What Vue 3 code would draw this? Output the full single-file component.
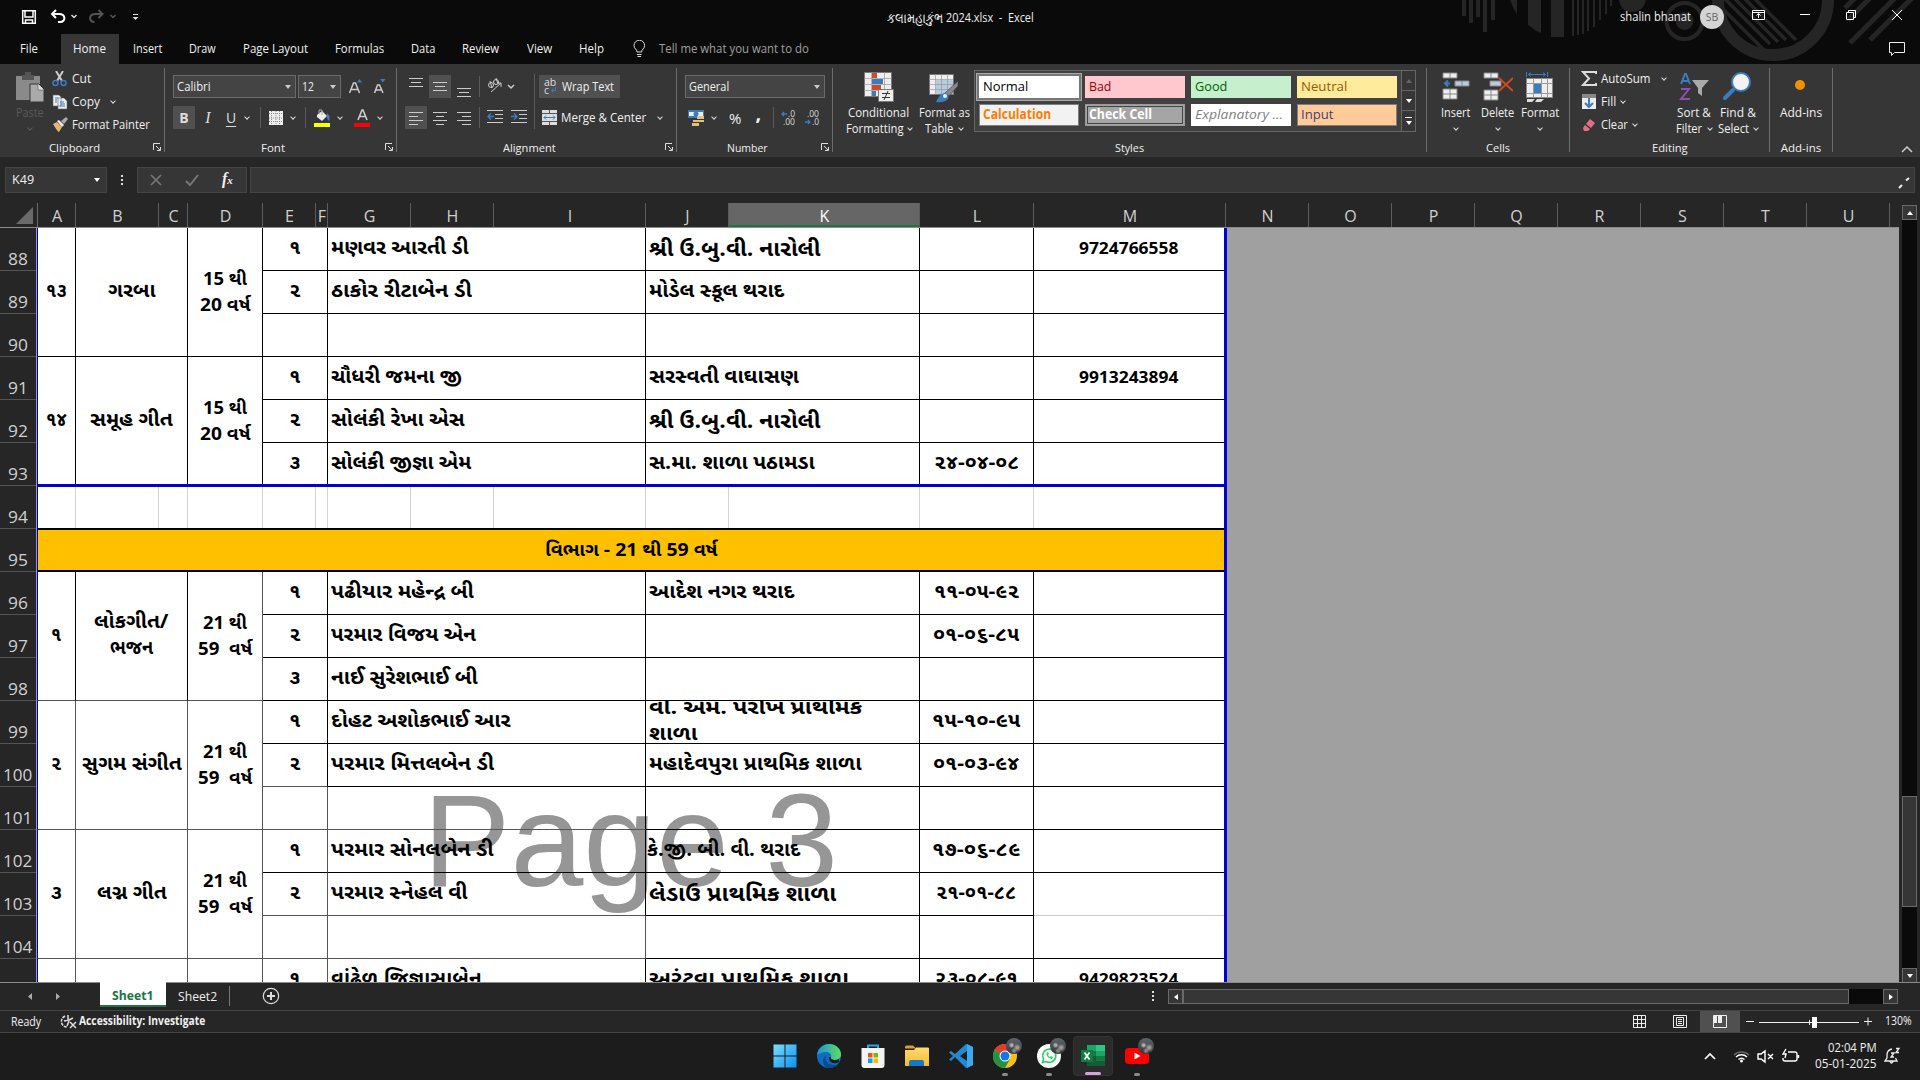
<script setup>
// Scales a text run horizontally so that it takes up the given width.
const fit = (el, { value }) => {
  if (!value) return
  el.style.transform = ''
  el.style.marginRight = ''
  const w = el.offsetWidth
  if (!w) return
  el.style.transform = `scaleX(${value / w})`
  el.style.marginRight = `${value - w}px`
}
const vFit = { mounted: fit, updated: fit }

const tabs = [
  ['File', 18], ['Home', 33], ['Insert', 29], ['Draw', 27], ['Page Layout', 65], ['Formulas', 49],
  ['Data', 24], ['Review', 37], ['View', 25], ['Help', 25],
]

const styles = [
  ['Normal', 'normal', 45], ['Bad', 'bad', 22], ['Good', 'good', 32], ['Neutral', 'neutral', 46],
  ['Calculation', 'calc', 68], ['Check Cell', 'check', 63], ['Explanatory ...', 'expl', 88], ['Input', 'input', 32],
]

const columns = [
  ['A', 38], ['B', 83], ['C', 29], ['D', 75], ['E', 53], ['F', 12], ['G', 83], ['H', 83], ['I', 152],
  ['J', 83], ['K', 191], ['L', 114], ['M', 192], ['N', 83], ['O', 83], ['P', 83], ['Q', 83], ['R', 83],
  ['S', 83], ['T', 83], ['U', 83],
]
const rowNumbers = Array.from({ length: 18 }, (_, i) => (i < 17 ? 88 + i : ''))

// Grid lines: 1 A, 2 B:C, 3 D, 4 E:F, 5 G:I, 6 J:K, 7 L, 8 M
const cells = []
const put = (col, row, span, lines, cls = '') => cells.push({ col, row, span, lines, cls })

const groups = [
  [1, '૧૩', 21, [['ગરબા', 48]], '15 થી', '20 વર્ષ', 50],
  [4, '૧૪', 21, [['સમૂહ ગીત', 83]], '15 થી', '20 વર્ષ', 50],
  [9, '૧', 10, [['લોકગીત/', 74], ['ભજન', 43]], '21 થી', '59  વર્ષ', 54],
  [12, '૨', 10, [['સુગમ સંગીત', 100]], '21 થી', '59  વર્ષ', 54],
  [15, '૩', 11, [['લગ્ન ગીત', 70]], '21 થી', '59  વર્ષ', 54],
]
for (const [row, n, nw, name, a, b, bw] of groups) {
  const soft = row > 9 ? 'soft-r soft-b' : row === 9 ? 'soft-b' : ''
  const end = row === 4 ? ' no-b' : ''
  put(1, row, 3, [[n, nw]], soft + end)
  put(2, row, 3, name, soft + end)
  put(3, row, 3, [[a, 44], [b, bw]], 'age ' + (row >= 9 ? 'soft-r soft-b' : '') + end)
}
const entries = [
  [1, '૧', 'મણવર આરતી ડી', 138, 'શ્રી ઉ.બુ.વી. નારોલી', 171, '', 0, '9724766558'],
  [2, '૨', 'ઠાકોર રીટાબેન ડી', 141, 'મોડેલ સ્કૂલ થરાદ', 135],
  [3],
  [4, '૧', 'ચૌધરી જમના જી', 131, 'સરસ્વતી વાઘાસણ', 150, '', 0, '9913243894'],
  [5, '૨', 'સોલંકી રેખા એસ', 134, 'શ્રી ઉ.બુ.વી. નારોલી', 171],
  [6, '૩', 'સોલંકી જીજ્ઞા એમ', 140, 'સ.મા. શાળા પઠામડા', 166, '૨૪-૦૪-૦૮', 85],
  [9, '૧', 'પઢીયાર મહેન્દ્ર બી', 143, 'આદેશ નગર થરાદ', 145, '૧૧-૦૫-૯૨', 85],
  [10, '૨', 'પરમાર વિજય એન', 145, '', 0, '૦૧-૦૬-૮૫', 86],
  [11, '૩', 'નાઈ સુરેશભાઈ બી', 147],
  [12, '૧', 'દોહટ અશોકભાઈ આર', 179, ['વી. એમ. પરીખ પ્રાથમિક', 'શાળા'], [213, 49], '૧૫-૧૦-૯૫', 88],
  [13, '૨', 'પરમાર મિત્તલબેન ડી', 163, 'મહાદેવપુરા પ્રાથમિક શાળા', 213, '૦૧-૦૩-૯૪', 86],
  [14],
  [15, '૧', 'પરમાર સોનલબેન ડી', 163, 'કે.જી. બી. વી. થરાદ', 153, '૧૭-૦૬-૮૯', 88],
  [16, '૨', 'પરમાર સ્નેહલ વી', 137, 'લેડાઉ પ્રાથમિક શાળા', 187, '૨૧-૦૧-૮૮', 80],
  [17],
  [18, '૧', 'વાંઢેળ જિજ્ઞાસાબેન', 151, 'અરંટવા પ્રાથમિક શાળા', 200, '૨૩-૦૮-૯૧', 83, '9429823524'],
]
const lines = (t, w) => (Array.isArray(t) ? t.map((s, i) => [s, w[i]]) : t ? [[t, w]] : [])
for (const [r, n, name, nw, school, sw, date, dw, phone] of entries) {
  const last = r === 6 ? ' no-b' : ''
  put(4, r, 1, lines(n, 11), (r >= 14 ? 'soft-r' : '') + ([13, 14, 16, 17].includes(r) ? ' soft-b' : '') + last)
  put(5, r, 1, lines(name, nw), 'left' + ([14, 16, 17].includes(r) ? ' soft-b' : '') + (r === 17 ? ' soft-r' : '') + last)
  put(6, r, 1, lines(school, sw), 'left' + ([1, 5, 16].includes(r) ? ' big' : '') + (r === 15 ? ' pull' : '') + last)
  put(7, r, 1, lines(date, dw), last)
  put(8, r, 1, lines(phone, 99), 'phone' + (r === 16 ? ' pale-b' : '') + last)
}
for (let c = 1; c < 4; c++) put(c, 18, 1, [], 'soft-r')
const spacerCols = [38, 83, 29, 75, 53, 12, 83, 83, 152, 83, 191, 114]

const taskIcons = ['start', 'edge', 'store', 'folder', 'code', 'chrome', 'whatsapp', 'excel', 'youtube']
const hasBadge = (n) => ['chrome', 'whatsapp', 'youtube'].includes(n)
</script>

<template>
  <div class="app">
    <header class="top">
      <svg class="decor" width="500" height="64" viewBox="0 0 500 64">
        <g fill="none" stroke="#252525" stroke-width="4">
          <path d="M44 0v16M51 0v23M58 0v17M65 0v32M73 0v20" />
          <path d="M153 0v36M158 0v35M163 0v34M168 0v31M174 0v27M180 0v20M186 0v14M191 0v6" stroke-width="2" />
          <path d="M298-8l52 52M308-8l50 50M318-8l48 48M328-8l48 48M290-4l54 54" stroke-width="3.500" />
          <path d="M425 8L436-3M428 20l24-24M430 43L477-4M450 40L494-4" stroke-width="5" />
          <circle cx="264.500" cy="21" r="18" /><circle cx="264.500" cy="21" r="7" fill="#252525" />
          <circle cx="353" cy="0" r="55" stroke-width="12" />
        </g>
        <path d="M90 0h7v14q-4-6-7-14zM108 0h13v33q-7-3-13-8zM131 0h13v37h-13zM199 0h27q-3 12-14 12T199 0z" fill="#252525" />
      </svg>
      <div class="title">
        <svg class="quick" width="145" height="34" viewBox="0 0 145 34" fill="none">
          <path d="M22.700 10.700h12.600v12.600H22.700zM25 11v6h8v-6M25.500 23v-3h7v3" stroke="#fff" stroke-width="1.500" />
          <path d="M56 10l-4 4 4 4M52.500 14H59c7 0 7 8 1 8h-2" stroke="#fff" stroke-width="2" />
          <path d="M71.500 15l2.500 2.500 2.500-2.500" stroke="#ddd" stroke-width="1.500" />
          <path d="M82 10l4 4-4 4M85.500 14H79c-7 0-7 8-1 8" stroke="#555" stroke-width="2" transform="translate(16.500 0)" />
          <path d="M110.500 15l2.500 2.500 2.500-2.500" stroke="#555" stroke-width="1.500" />
          <path d="M108.500 14.500h5" stroke="#ddd" transform="translate(24.500 0)" /><path d="M132.500 17h6l-3 3z" fill="#ddd" />
        </svg>
        <div class="doc"><span v-fit="56" class="guj">કલામહાકુંભ</span><span v-fit="88" class="rest">2024.xlsx&nbsp; -&nbsp; Excel</span></div>
        <div class="user"><span v-fit="71">shalin bhanat</span></div>
        <div class="avatar">SB</div>
        <svg class="winbtns" width="190" height="34" viewBox="0 0 190 34" fill="none" stroke="#fff" stroke-width="1">
          <path d="M22.500 10.500h12v9h-12zM22.500 12.500h12M28.500 18v-4M26.500 15.500l2-2 2 2" />
          <path d="M70 14.500h10M116.500 12.500h7v7h-7zM118.500 12v-1.500h7v7H124M162 10l10 10M172 10l-10 10" />
        </svg>
      </div>
      <nav class="tabs">
        <div v-for="[t, w] in tabs" :key="t" class="tab" :class="{ on: t === 'Home', file: t === 'File' }"><span v-fit="w">{{ t }}</span></div>
        <svg class="bulb" width="13" height="18" viewBox="0 0 13 18" fill="none" stroke="#ddd"><path d="M4 12c0-3-3-3-3-6.500a5.300 5.300 0 0 1 10.600 0C11.600 9 8.600 9 8.600 12zM4 14.500h4.600M4.500 16.500h3.600" /></svg>
        <span v-fit="150" class="tell">Tell me what you want to do</span>
        <svg class="comment" width="18" height="17" viewBox="0 0 18 17" fill="none" stroke="#eee"><path d="M1.500 1.500h15v10h-10l-3 3v-3h-2z" /></svg>
      </nav>
    </header>

    <section class="ribbon">
      <div class="group g-clip">
        <div class="body">
          <div class="tile paste">
            <svg width="30" height="31" viewBox="0 0 30 31"><path d="M1 4h24v24H1z" fill="#8a8a8a" /><path d="M7 3h3V0h6v3h3v5H7z" fill="#555" /><path d="M15 12h9l5 5v13H15z" fill="#aaa" stroke="#363636" /><path d="M23 12v6h6" fill="#ddd" stroke="#555" stroke-width=".6" /></svg>
            <span v-fit="28">Paste</span><i class="chev"></i>
          </div>
          <div class="stack">
            <div class="line"><svg width="16" height="16" viewBox="0 0 16 16" fill="none"><path d="M4 0l6 10M11 0L5 10" stroke="#ccc" stroke-width="2" /><circle cx="3.500" cy="12" r="2.500" stroke="#3a7cc0" stroke-width="1.500" /><circle cx="11.500" cy="12" r="2.500" stroke="#3a7cc0" stroke-width="1.500" /></svg><span v-fit="19">Cut</span></div>
            <div class="line"><svg width="16" height="16" viewBox="0 0 16 16"><path d="M1 1h6l2 2v9H1zM6 4h6l3 3v8H6z" fill="#eee" stroke="#666" stroke-width=".6" /><path d="M3 4h3M3 6h2M3 8h2M8 8h4M8 10h5M8 12h5" stroke="#3a7cc0" /></svg><span v-fit="28">Copy</span><i class="chev"></i></div>
            <div class="line"><svg width="16" height="16" viewBox="0 0 16 16"><path d="M1 7l4-2 5 5-3 5q-2-1-6-8z" fill="#e5b871" /><path d="M5 4l2-1 5 5-2 2z" fill="#eee" /><path d="M9 4l5-4 2 2-4 5z" fill="#aaa" /></svg><span v-fit="78">Format Painter</span></div>
          </div>
        </div>
        <div class="label has"><span v-fit="51">Clipboard</span><svg class="launch" width="9" height="9" viewBox="0 0 9 9" fill="none" stroke="#ddd"><path d="M.5 7V.5H7M3 3l4 4M7.500 4v3.500H4" /></svg></div>
      </div>

      <div class="group g-font">
        <div class="body col">
          <div class="tools">
            <div class="combo w123"><span v-fit="34">Calibri</span><b></b></div>
            <div class="combo w43"><span v-fit="12">12</span><b></b></div>
            <svg class="ml6" width="40" height="23" viewBox="0 0 40 23"><path d="M.5 18L4.500 8h2l4 10M2 14.500h7M25.500 18l3-8h2l3.500 8M27 15h6" fill="none" stroke="#ccc" stroke-width="1.500" /><path d="M8 7.500l2.500-3.500L13 7.500zM31 4h5.500l-2.700 3.500z" fill="#3a7cc0" /></svg>
          </div>
          <div class="tools">
            <div class="btn on bold">B</div><div class="btn ital">I</div><div class="btn und">U</div><i class="chev"></i><u class="sep m1"></u>
            <svg class="ml8" width="14" height="14" viewBox="0 0 14 14"><path d="M0 0h14v14H0z" fill="#eee" /><path d="M0 2.500h14M0 7h14M0 10.500h14M2.500 0v14M7 0v14M10.500 0v14" stroke="#777" stroke-width=".8" stroke-dasharray="1 1" /></svg>
            <i class="chev ml8"></i><u class="sep m2"></u>
            <svg class="ml8" width="17" height="18" viewBox="0 0 17 18"><path d="M3 6l5-4 5 5-5 5-5-4z" fill="#eee" /><path d="M5 5V1h3v5" fill="none" stroke="#aaa" /><path d="M13 4q4 3 2 8-3-2-2-8" fill="#3a7cc0" /><path d="M0 14h16v4H0z" fill="#ff0" /></svg>
            <i class="chev ml5"></i>
            <svg class="ml10" width="17" height="18" viewBox="0 0 17 18"><path d="M4 11l4-10h1l4 10M5.500 7.500h6" fill="none" stroke="#ccc" stroke-width="1.600" /><path d="M0 14h16v4H0z" fill="red" /></svg>
            <i class="chev ml5"></i>
          </div>
        </div>
        <div class="label has"><span v-fit="24">Font</span><svg class="launch" width="9" height="9" viewBox="0 0 9 9" fill="none" stroke="#ddd"><path d="M.5 7V.5H7M3 3l4 4M7.500 4v3.500H4" /></svg></div>
      </div>

      <div class="group g-align">
        <div class="body">
          <svg class="alicons" width="138" height="56" viewBox="0 0 138 56" fill="none" stroke="#ccc">
            <path d="M32 1h22v23H32zM8 32h22v23H8z" fill="#505050" stroke="none" />
            <path d="M12 4.500h14M14 8.500h10M12 12.500h14M36 8.500h14M38 12.500h10M36 16.500h14M60 14.500h14M62 18.500h10M60 22.500h14" />
            <path d="M12 38.500h14M12 42.500h9M12 46.500h14M12 50.500h9M36 38.500h14M39 42.500h8M36 46.500h14M39 50.500h8M60 38.500h14M65 42.500h9M60 46.500h14M65 50.500h9" />
            <path d="M82.500 2v21M82.500 33v21M137.500 0v55" stroke="#5a5a5a" />
            <path d="M94 18l10-9M104 13V9h-4" /><circle cx="94" cy="11" r="2.500" /><circle cx="99" cy="8" r="2.500" /><path d="M95 14l-2-7M101 10l-2-6" />
            <path d="M111 11l3 3 3-3" stroke-width="1.500" />
            <path d="M90 36.500h16M98 40.500h8M98 44.500h8M90 48.500h16M114 36.500h16M122 40.500h8M122 44.500h8M114 48.500h16" />
            <path d="M97 42.500h-6m3-3l-3 3 3 3M114 42.500h6m-3-3l3 3-3 3" stroke="#3a7cc0" stroke-width="1.500" />
          </svg>
          <div class="col wrapcol">
            <div class="wrapbtn"><svg width="14" height="17" viewBox="0 0 14 17"><text x="0" y="8" font-size="10.500" fill="#ddd" font-family="Open Sans, sans-serif">ab</text><text x="0" y="16" font-size="10.500" fill="#ddd" font-family="Open Sans, sans-serif">c</text><path d="M11.500 9v3.500H7.500m2-2l-2 2 2 2" fill="none" stroke="#3a7cc0" /></svg><span v-fit="52">Wrap Text</span></div>
            <div class="wrapbtn plain"><svg width="15" height="15" viewBox="0 0 15 15"><path d="M0 0h15v15H0z" fill="#ddd" /><path d="M0 3.500h15M0 11.500h15M7.500 0v3M7.500 12v3" stroke="#555" /><path d="M2 7.500h11M4 5.500l-2 2 2 2M11 5.500l2 2-2 2" fill="none" stroke="#3a7cc0" /></svg><span v-fit="85">Merge &amp; Center</span><i class="chev"></i></div>
          </div>
        </div>
        <div class="label has"><span v-fit="53">Alignment</span><svg class="launch" width="9" height="9" viewBox="0 0 9 9" fill="none" stroke="#ddd"><path d="M.5 7V.5H7M3 3l4 4M7.500 4v3.500H4" /></svg></div>
      </div>

      <div class="group g-num">
        <div class="body col">
          <div class="tools"><div class="combo w140"><span v-fit="40">General</span><b></b></div></div>
          <div class="tools numrow">
            <svg width="17" height="17" viewBox="0 0 17 17"><path d="M0 1h16v8H0z" fill="#3a7cc0" /><path d="M1 3h14v4H1z" fill="#eee" /><circle cx="8" cy="5" r="2.500" fill="#3a7cc0" /><path d="M9 7h7v3H9zM5 11h7v2H5zM9 11h7v2H9zM4 14h7v3H4z" fill="#e5c07a" /></svg>
            <i class="chev ml5"></i><span class="pct">%</span><span class="comma">,</span><u class="sep"></u>
            <svg width="40" height="17" viewBox="0 0 40 17" font-family="Open Sans, sans-serif" font-size="8.500" fill="#ddd"><text x="7" y="8">.0</text><text x="2" y="16">.00</text><text x="26" y="8">.00</text><text x="31" y="16">.0</text><path d="M6 5H1m2-2L1 5l2 2M24 13h5m-2-2l2 2-2 2" fill="none" stroke="#3a7cc0" stroke-width="1.300" /></svg>
          </div>
        </div>
        <div class="label has"><span v-fit="41">Number</span><svg class="launch" width="9" height="9" viewBox="0 0 9 9" fill="none" stroke="#ddd"><path d="M.5 7V.5H7M3 3l4 4M7.500 4v3.500H4" /></svg></div>
      </div>

      <div class="group g-styles">
        <div class="body">
          <div class="tile w70">
            <svg width="30" height="31" viewBox="0 0 30 31"><path d="M.5.5h27v24H.5z" fill="#eee" stroke="#777" /><path d="M8 1h5v5H8zM8 13h9v5H8z" fill="#d24726" /><path d="M8 7h11v5H8zM8 19h4v5H8z" fill="#3a7cc0" /><path d="M0 6.500h28M0 12.500h28M0 18.500h28M7.500 0v24M20.500 0v24" stroke="#999" stroke-width=".7" /><path d="M14.500 17.500h15v12h-15z" fill="#eee" stroke="#777" /><path d="M18 21.500h8M18 25.500h8M24 19l-4 9" stroke="#333" /></svg>
            <span v-fit="61">Conditional</span><div class="two"><span v-fit="58">Formatting</span><i class="chev"></i></div>
          </div>
          <div class="tile w62">
            <svg width="30" height="31" viewBox="0 0 30 31"><path d="M.5 2.500h24v20H.5z" fill="#eee" stroke="#777" /><path d="M7 8h17v14H7z" fill="#b5cbe0" /><path d="M0 7.500h24M0 12.500h24M0 17.500h24M6.500 2v20M12.500 2v20M18.500 2v20" stroke="#999" stroke-width=".7" /><path d="M29 9v5l-9 10-4-3z" fill="#888" stroke="#363636" stroke-width=".6" /><path d="M7 30q4-9 9-9 5 2 3 6-4 4-12 3z" fill="#3a7cc0" /><circle cx="16" cy="24" r="2" fill="#eee" /></svg>
            <span v-fit="51">Format as</span><div class="two"><span v-fit="28">Table</span><i class="chev"></i></div>
          </div>
          <div class="gallery">
            <div class="swatches"><div v-for="[t, c, w] in styles" :key="t" class="sw" :class="c"><span v-fit="w">{{ t }}</span></div></div>
            <div class="gscroll"><div><i class="up dim"></i></div><div><i class="dn"></i></div><div><s></s><i class="dn"></i></div></div>
          </div>
        </div>
        <div class="label"><span v-fit="29">Styles</span></div>
      </div>

      <div class="group g-cells">
        <div class="body">
          <div class="tile w42">
            <svg width="30" height="31" viewBox="0 0 30 31"><path d="M2 1h14v5H2zM2 17h14v10H2z" fill="#eee" stroke="#888" /><path d="M9 1v5M9 17v10M2 22h14" stroke="#888" /><path d="M14 9h14v5H14z" fill="#b5cbe0" stroke="#888" /><path d="M21 9v5" stroke="#888" /><path d="M9 11.500H4m3-3l-3 3 3 3" stroke="#3a7cc0" stroke-width="2" fill="none" /></svg>
            <span v-fit="29">Insert</span><i class="chev"></i>
          </div>
          <div class="tile w42">
            <svg width="30" height="31" viewBox="0 0 30 31"><path d="M1 1h14v5H1zM1 18h14v10H1z" fill="#eee" stroke="#888" /><path d="M8 1v5M8 18v10M1 23h14" stroke="#888" /><path d="M7 9h11v5H7z" fill="#b5cbe0" stroke="#888" /><path d="M16 6l14 13M30 6L16 19" stroke="#d24726" stroke-width="2" /></svg>
            <span v-fit="33">Delete</span><i class="chev"></i>
          </div>
          <div class="tile w42">
            <svg width="30" height="31" viewBox="0 0 30 31"><path d="M1.500 6.500h26v19h-26z" fill="#eee" stroke="#888" /><path d="M1 11.500h26M1 21.500h26M8.500 6v20M16.500 6v20M22.500 6v20" stroke="#999" /><path d="M9 12h7v9H9z" fill="#3a7cc0" /><path d="M1.500 0v5M22.500 0v5M3 2.500h18M6 .5l-2.500 2L6 4.500M18 .5l2.500 2-2.500 2" stroke="#3a7cc0" fill="none" /><path d="M2 27h8l-3 3H2zM12 27h7l-3 3h-6z" fill="#ddd" /></svg>
            <span v-fit="38">Format</span><i class="chev"></i>
          </div>
        </div>
        <div class="label"><span v-fit="24">Cells</span></div>
      </div>

      <div class="group g-edit">
        <div class="body">
          <div class="stack">
            <div class="line"><svg width="16" height="16" viewBox="0 0 16 16" fill="none" stroke="#ddd" stroke-width="2"><path d="M15 3V1H2l6 6.500L2 14h13v-2" /></svg><span v-fit="50">AutoSum</span><i class="chev far"></i></div>
            <div class="line"><svg width="16" height="16" viewBox="0 0 16 16"><path d="M1 0h14v15H1z" fill="#eee" /><path d="M1 0h14v4H1z" fill="#888" /><path d="M8 4v9M4 9l4 4 4-4" stroke="#3a7cc0" stroke-width="2" fill="none" /></svg><span v-fit="15">Fill</span><i class="chev"></i></div>
            <div class="line"><svg width="16" height="16" viewBox="0 0 16 16"><path d="M9 2l5 4-4 5-5-4z" fill="#e0708a" /><path d="M4 8l5 4-2 2H3l-1-3z" fill="#e0708a" /></svg><span v-fit="27">Clear</span><i class="chev"></i></div>
          </div>
          <div class="tile w44 sort">
            <svg width="30" height="31" viewBox="0 0 30 31" fill="none"><path d="M2 12L6 2h1l4 10M3.500 9h6" stroke="#3a7cc0" stroke-width="2" /><path d="M2 17h8L2 27h9" stroke="#8e4fb0" stroke-width="2" /><path d="M13 8h17l-7 8v8l-4-3v-5z" fill="#aaa" /></svg>
            <span v-fit="34">Sort &amp;</span><div class="two"><span v-fit="26">Filter</span><i class="chev"></i></div>
          </div>
          <div class="tile w44">
            <svg width="30" height="31" viewBox="0 0 30 31"><path d="M2 26l8-8" stroke="#3a7cc0" stroke-width="4" stroke-linecap="round" /><circle cx="18" cy="10" r="9" fill="#f3f3f3" stroke="#3a7cc0" stroke-width="2" /></svg>
            <span v-fit="36">Find &amp;</span><div class="two"><span v-fit="31">Select</span><i class="chev"></i></div>
          </div>
        </div>
        <div class="label"><span v-fit="36">Editing</span></div>
      </div>

      <div class="group g-add">
        <div class="body"><div class="tile w62"><svg width="30" height="31" viewBox="0 0 30 31"><circle cx="14" cy="13" r="5" fill="#f29100" /></svg><span v-fit="42">Add-ins</span></div></div>
        <div class="label"><span v-fit="40">Add-ins</span></div>
      </div>
      <div class="collapse"><svg width="12" height="7" viewBox="0 0 12 7" fill="none" stroke="#ccc" stroke-width="1.500"><path d="M1 6l5-5 5 5" /></svg></div>
    </section>

    <section class="fbar">
      <div class="namebox"><span v-fit="22">K49</span><i class="dn"></i></div>
      <div class="dots"><i></i><i></i><i></i></div>
      <div class="fbtns"><svg width="108" height="24" viewBox="0 0 108 24" fill="none"><path d="M13 7l10 10M23 7L13 17" stroke="#777" stroke-width="1.700" /><path d="M48 13l4 4 8-10" stroke="#777" stroke-width="2" /></svg><em>f<small>x</small></em></div>
      <div class="finput"><svg width="12" height="12" viewBox="0 0 12 12" stroke="#eee" stroke-width="2"><path d="M8 3.500L11 1M1 11l3-3" /></svg></div>
    </section>

    <section class="sheet">
      <div class="main">
        <div class="colhead">
          <div class="corner"></div>
          <div v-for="[c, w] in columns" :key="c" class="ch" :class="{ sel: c === 'K' }" :style="{ width: w + 'px' }">{{ c }}</div>
        </div>
        <div class="view">
          <div class="rowhead"><div v-for="(n, i) in rowNumbers" :key="i"><span v-fit="n > 99 ? 29 : 20">{{ n }}</span></div></div>
          <div class="page">
            <div class="mark">Page 3</div>
            <div class="cells">
              <div v-for="(c, i) in cells" :key="i" class="cell" :class="c.cls" :style="{ gridColumn: c.col, gridRow: `${c.row} / span ${c.span}` }">
                <div v-for="([t, w], k) in c.lines" :key="k" class="tl"><span v-fit="w">{{ t }}</span></div>
              </div>
              <div class="spacer"><i v-for="(w, i) in spacerCols" :key="i" :style="{ width: w + 'px' }"></i></div>
              <div class="banner"><span v-fit="173">વિભાગ - 21 થી 59 વર્ષ</span></div>
            </div>
          </div>
          <div class="void"></div>
        </div>
      </div>
      <div class="vscroll"><div class="sb"><i class="up"></i></div><div class="track"><div class="thumb"></div></div><div class="sb"><i class="dn"></i></div></div>
    </section>

    <section class="sheettabs">
      <svg width="100" height="28" viewBox="0 0 100 28" fill="#aaa"><path d="M32 10v7l-4-3.500zM56 10v7l4-3.500z" /></svg>
      <div class="st on"><span v-fit="41">Sheet1</span></div>
      <div class="st"><span v-fit="39">Sheet2</span></div>
      <u></u>
      <svg class="plus" width="18" height="18" viewBox="0 0 18 18" fill="none" stroke="#ddd"><circle cx="9" cy="9" r="7.700" stroke-width="1.200" /><path d="M9 5v8M5 9h8" stroke-width="2" /></svg>
      <div class="dots"><i></i><i></i><i></i></div>
      <div class="hscroll"><div class="sb"><i class="lf"></i></div><div class="hthumb"></div><div class="htrack"></div><div class="sb"><i class="rt"></i></div></div>
    </section>

    <section class="status">
      <span v-fit="30" class="ready">Ready</span>
      <svg class="acc" width="17" height="16" viewBox="0 0 17 16" fill="none" stroke="#ddd" stroke-width="1.500"><path d="M5 2Q0 5 2 10q2 3 5 3" stroke-dasharray="3 1" /><path d="M8 1v5M4 7l5-1 4-2M9 7l-2 5M10 8l6 6M16 8l-6 6" /></svg>
      <span v-fit="126" class="access">Accessibility: Investigate</span>
      <div class="views">
        <svg width="14" height="14" viewBox="0 0 14 14" fill="none" stroke="#eee"><path d="M.5.5h12v12H.5zM4.500 0v13M8.500 0v13M0 4.500h13M0 8.500h13" /></svg>
        <svg width="14" height="14" viewBox="0 0 14 14" fill="none" stroke="#eee"><path d="M.5.5h13v12H.5zM3.500 2.500h7v8h-7zM5 4.500h4M5 6.500h4M5 8.500h4" /></svg>
        <div class="von"><svg width="14" height="14" viewBox="0 0 14 14" fill="none" stroke="#eee"><path d="M.5.5h13v12H.5z" /><path d="M1 1h3v7H1zM5 1h4v7H5z" fill="#eee" stroke="none" /></svg></div>
      </div>
      <svg class="zoom" width="132" height="20" viewBox="0 0 132 20" stroke="#eee"><path d="M6 9.500h8M124 9.500h8M128 5.500v8M19 10.500h100M69.500 8v5" /><path d="M72 5h5v11h-5z" fill="#fff" stroke="none" /></svg>
      <div class="pc"><span v-fit="27">130%</span></div>
    </section>

    <footer class="taskbar">
      <div class="dock">
        <div v-for="n in taskIcons" :key="n" class="ti" :class="{ active: n === 'excel', run: hasBadge(n) }">
          <svg width="24" height="24" viewBox="0 0 24 24">
            <defs>
              <linearGradient id="w" x2="1" y2="1"><stop stop-color="#7adfff" /><stop offset="1" stop-color="#0a90f0" /></linearGradient>
              <linearGradient id="e" x1="0" x2="1"><stop stop-color="#1c8fe0" /><stop offset="1" stop-color="#5ce05a" /></linearGradient>
              <linearGradient id="f" x2="0" y2="1"><stop stop-color="#ffdc70" /><stop offset="1" stop-color="#f5b92e" /></linearGradient>
            </defs>
            <path v-if="n === 'start'" d="M.5.5h11v11H.5zM12.500.5h11v11h-11zM.5 12.500h11v11H.5zM12.500 12.500h11v11h-11z" fill="url(#w)" />
            <template v-if="n === 'edge'">
              <circle cx="12" cy="12" r="12" fill="#0f6cbf" />
              <path d="M0 11C1 4 6 0 12 0c7 0 12 5 12 10 0 4-3 6-7 6-3 0-4-1-3-3 1-3-2-5-5-5-4 0-7 2-9 3z" fill="url(#e)" />
              <path d="M9 11c-2 5 2 11 10 10l2-1q-3 4-9 4C6 24 4 15 9 11z" fill="#0b4a8f" />
              <path d="M14 13c-1 3 5 4 8 2v3c-5 3-11 0-10-5z" fill="#1c1c1c" />
            </template>
            <template v-if="n === 'store'">
              <path d="M7 6V1.500h10V6" fill="none" stroke="#2aa5ea" stroke-width="2" /><path d="M.5 4h23v17q0 3-3 3h-17q-3 0-3-3z" fill="#f4f4f4" />
              <path d="M7 9h4.500v4.500H7z" fill="#f25022" /><path d="M12.500 9H17v4.500h-4.500z" fill="#7fba00" /><path d="M7 14.500h4.500V19H7z" fill="#00a4ef" /><path d="M12.500 14.500H17V19h-4.500z" fill="#ffb900" />
            </template>
            <template v-if="n === 'folder'">
              <path d="M0 3q0-1.500 1.500-1.500H8l3 3H0z" fill="#e0a01b" /><path d="M0 6h9l2-2.500h12q1 0 1 1V22H0z" fill="url(#f)" /><path d="M4 22v-4q0-2 2-2h11q2 0 2 2v4z" fill="#1378c8" />
            </template>
            <template v-if="n === 'code'">
              <path d="M17 0l7 3v18l-7 3L6 13l-4 4-2-1.500L4 12 0 8.500 2 7l4 3zM18 7l-7 5 7 5z" fill="#2489ca" fill-rule="evenodd" /><path d="M18 0l6 3v18l-6 3z" fill="#3aa9ef" />
            </template>
            <template v-if="n === 'chrome'">
              <circle cx="12" cy="12" r="12" fill="#fbc116" /><path d="M12 12L1.600 6A12 12 0 0 1 22.400 6z" fill="#e33b2e" /><path d="M12 12L1.600 6A12 12 0 0 0 12 24l5-9z" fill="#229342" /><circle cx="12" cy="12" r="5.500" fill="#fff" /><circle cx="12" cy="12" r="4.500" fill="#1a73e8" />
            </template>
            <template v-if="n === 'whatsapp'">
              <circle cx="12" cy="12" r="12" fill="#fff" /><path d="M5.500 18.500l1-3.500a6.600 6.600 0 1 1 2.500 2.500z" fill="none" stroke="#25d366" stroke-width="1.600" /><path d="M9.500 9q0 5 5.500 6l1-2-2-1-1 1q-2-1-2-2l1-1-1-2z" fill="#25d366" />
            </template>
            <template v-if="n === 'excel'">
              <path d="M6 1h9v7H6z" fill="#21a366" /><path d="M15 1h9v7h-9z" fill="#33c481" /><path d="M6 7h9v10H6z" fill="#107c41" /><path d="M15 7h9v5h-9z" fill="#21a366" /><path d="M6 12h18v10H6z" fill="#185c37" /><path d="M15 12h9v5h-9z" fill="#107c41" />
              <path d="M0 6h12v12H0z" fill="#107c41" /><path d="M3.500 8.500l5 7M8.500 8.500l-5 7" stroke="#fff" stroke-width="1.800" />
            </template>
            <template v-if="n === 'youtube'"><rect y="4" width="24" height="16" rx="4" fill="#f00" /><path d="M9.500 8.500v7l6-3.500z" fill="#fff" /></template>
          </svg>
          <i v-if="hasBadge(n)" class="badge"></i>
        </div>
      </div>
      <div class="tray">
        <svg width="110" height="24" viewBox="0 0 110 24" fill="none" stroke="#fff" stroke-width="1.400">
          <path d="M6 15l5-5 5 5" stroke-width="1.700" />
          <path d="M35 11a11 11 0 0 1 15 0" stroke="#666" /><path d="M37 13a8 8 0 0 1 11 0M39.500 15.500a4.500 4.500 0 0 1 6 0" /><circle cx="42.500" cy="17" r="1.500" fill="#fff" stroke="none" />
          <path d="M59 10h3l4-3v11l-4-3h-3zM69 10l5 5M74 10l-5 5M89 8h7q2 0 2 2v5q0 2-2 2H86q-2 0-2-2v-1M99.500 11v3" /><path d="M87 5l-3 5h3l-1 4" />
        </svg>
        <div class="clock"><div><span v-fit="49">02:04 PM</span></div><div><span v-fit="62">05-01-2025</span></div></div>
        <svg class="bell" width="17" height="18" viewBox="0 0 17 18" fill="none" stroke="#eee" stroke-width="1.300"><path d="M8 2Q3 3 3 8v3l-2 3h12l-1.500-3M6 14.500q1.500 3 3 0M7 6h3l-3 4h3M12 1.500h3l-3 4h3" /></svg>
      </div>
    </footer>
  </div>
</template>

<style>
body { background: #1c1c1c; overflow: hidden; }
</style>

<style scoped>
.app { width: 1920px; height: 1080px; overflow: hidden; background: #262626; color: #f0f0f0; font: 12px/16px "Open Sans", "Noto Sans", sans-serif; display: flex; flex-direction: column; }
.app * { box-sizing: border-box; }
svg { display: block; flex: none; }
span { display: inline-block; white-space: pre; transform-origin: 0 50%; flex: none; }
.top { height: 64px; background: #0a0a0a; position: relative; flex: none; }
.decor { position: absolute; right: 0; top: 0; }
.title, .tabs { position: relative; display: flex; align-items: center; }
.title { height: 34px; }
.doc { margin-left: 742px; width: 733px; padding-top: 2px; display: flex; align-items: center; }
.guj { font-size: 13.500px; }
.rest { margin-left: 3px; }
.user { width: 80px; }
.avatar { width: 24px; height: 24px; border-radius: 50%; background: #d4d4d4; color: #666; font-size: 10.500px; line-height: 24px; text-align: center; }
.winbtns { margin-left: 6px; }
.tabs { height: 30px; }
.tab { height: 30px; padding: 0 13.500px; line-height: 30px; display: flex; flex: none; }
.tab.file { padding: 0 23px 0 20px; }
.tab.on { background: #363636; padding: 0 13px 0 12px; margin-right: .5px; }
.bulb { margin-left: 16px; }
.tell { margin-left: 13px; color: #a0a0a0; }
.comment { margin-left: auto; margin-right: 14px; }

.ribbon { height: 93px; background: #363636; display: flex; flex: none; }
.group { height: 84px; margin-top: 4px; border-right: 1px solid #6c6c6c; display: flex; flex-direction: column; flex: none; }
.body { height: 71px; display: flex; }
.body.col, .col { flex-direction: column; }
.label { height: 14px; line-height: 14px; font-size: 11.500px; text-align: center; position: relative; padding-top: 3px; }
.label.has { padding-right: 15px; }
.launch { position: absolute; right: 2px; top: 5px; }
.g-clip { width: 165px; } .g-font { width: 232px; } .g-align { width: 280px; } .g-num { width: 156px; }
.g-styles { width: 594px; } .g-cells { width: 143px; } .g-edit { width: 200px; } .g-add { width: 63px; }
.chev { width: 4px; height: 4px; border: solid #ddd; border-width: 0 1.500px 1.500px 0; transform: rotate(45deg); display: block; flex: none; margin-bottom: 2px; }
.tile { display: flex; flex-direction: column; align-items: center; padding-top: 4px; }
.tile > span { margin-top: 2px; line-height: 16px; }
.tile > .chev { margin-top: 5px; }
.two { display: flex; align-items: center; gap: 5px; height: 16px; }
.paste { width: 32px; margin-left: 14px; color: #5a5a5a; }
.paste .chev { border-color: #5a5a5a; }
.stack { display: flex; flex-direction: column; margin: -1px 0 0 6px; }
.line { height: 23px; display: flex; align-items: center; gap: 4px; }
.line .chev { margin-left: 7px; }
.g-edit .stack { margin-left: 11px; width: 91px; }
.g-edit .line .chev { margin-left: 1px; }
.g-edit .line .far { margin-left: 7px; }
.tools { display: flex; height: 23px; align-items: center; margin-left: 8px; }
.body.col { padding-top: 7px; gap: 8px; }
.combo { height: 23px; border: 1px solid #6a6a6a; background: #444; display: flex; align-items: center; padding: 0 4px 0 3px; margin-right: 2px; flex: none; }
.combo b { margin-left: auto; border: solid transparent; border-width: 4px 3.500px 0; border-top-color: #ccc; }
.w123 { width: 123px; } .w43 { width: 43px; } .w140 { width: 140px; }
.btn { width: 22px; height: 23px; line-height: 23px; text-align: center; font-size: 14px; color: #ddd; margin-right: 2px; flex: none; }
.btn.on { background: #505050; }
.bold { font-weight: 700; } .ital { font-style: italic; font-family: "Liberation Serif", serif; font-size: 16px; } .und { text-decoration: underline; text-underline-offset: 3px; margin-left: -1px; }
.sep { width: 1px; height: 21px; background: #5a5a5a; flex: none; }
.m1 { margin-left: 11px; } .m2 { margin-left: 10px; }
.ml8 { margin-left: 8px; } .ml5 { margin-left: 7px; } .ml10 { margin-left: 12px; } .ml6 { margin-left: 6px; }
.und + .chev { margin-left: 1px; }
.alicons { margin-top: 6px; }
.wrapcol { display: flex; margin-left: 4px; padding-top: 7px; gap: 8px; }
.wrapbtn { height: 23px; background: #505050; display: flex; align-items: center; gap: 4px; padding-left: 5px; width: 81px; }
.wrapbtn.plain { background: none; padding-left: 3px; width: 132px; }
.plain .chev { margin-left: 8px; }
.g-num .tools { margin-left: 8px; }
.numrow { padding-left: 3px; }
.pct { font-size: 15px; margin-left: 13px; }
.comma { font-size: 20px; font-weight: 700; margin: -10px 12px 0 14px; }
.numrow > svg:last-child { margin-left: 7px; }
.w70 { width: 70px; } .w62 { width: 62px; } .w42 { width: 42px; } .w44 { width: 44px; }
.g-styles .w70 { margin-left: 11px; }
.g-styles .w62 { margin-left: -1px; }
.g-cells .w42:first-child { margin-left: 8px; }
.gallery { margin: 2px 0 0 -1px; height: 62px; width: 442px; border: 1px solid #666; display: flex; background: #404040; }
.swatches { display: grid; grid-template-columns: repeat(4, 100px); grid-auto-rows: 22px; column-gap: 6px; row-gap: 6px; padding: 5px 0 0 4px; width: 426px; }
.sw { background: #fff; padding-left: 4px; line-height: 20px; font-size: 13.500px; color: #000; }
.normal { outline: 2px solid #777; box-shadow: 0 0 0 3px #aaa; }
.bad { background: #ffc7ce; color: #9c0006; } .good { background: #c6efce; color: #006100; } .neutral { background: #ffeb9c; color: #9c5700; }
.calc { background: #f2f2f2; color: #fa7d00; font-weight: 700; border: 1px solid #7f7f7f; padding-left: 3px; line-height: 18px; }
.check { background: #a5a5a5; color: #fff; font-weight: 700; border: 3px double #444; outline: 1px solid #999; outline-offset: -1px; line-height: 14px; padding-left: 1px; }
.expl { color: #7f7f7f; font-style: italic; } .input { background: #ffcc99; color: #3f3f76; border: 1px solid #7f7f7f; padding-left: 3px; line-height: 18px; }
.gscroll { width: 14px; border-left: 1px solid #666; }
.gscroll div { height: 20px; display: flex; flex-direction: column; align-items: center; justify-content: center; background: #363636; border-bottom: 1px solid #666; }
.gscroll div:last-child { border: 0; }
.gscroll s { width: 7px; height: 1px; background: #fff; margin-bottom: 3px; }
.up, .dn, .lf, .rt { display: block; border: 3.500px solid transparent; }
.up { border-top: 0; border-bottom: 4px solid #fff; } .dn { border-bottom: 0; border-top: 4px solid #fff; }
.lf { border-left: 0; border-right: 4px solid #fff; } .rt { border-right: 0; border-left: 4px solid #fff; }
.up.dim { border-bottom-color: #666; }
.collapse { margin: 82px 0 0 68px; }

.fbar { height: 46px; padding: 10px 0 10px 5px; display: flex; flex: none; }
.namebox { width: 102px; height: 26px; border: 1px solid #444; background: #363636; display: flex; align-items: center; justify-content: space-between; padding: 0 6px; }
.dots { width: 3px; margin: 8px 13px 0 14px; display: flex; flex-direction: column; gap: 2px; }
.dots i { width: 2px; height: 2px; background: #ddd; }
.fbtns { width: 110px; height: 26px; border: 1px solid #444; background: #363636; position: relative; }
.fbtns em { position: absolute; left: 84px; top: 2px; font: italic 700 16px/18px "Liberation Serif", serif; }
.fbtns small { font-size: 11px; }
.finput { width: 1665px; height: 26px; margin-left: 3px; border: 1px solid #444; background: #363636; display: flex; justify-content: flex-end; padding: 9px 4px 0; }

.sheet { height: 779px; display: flex; flex: none; }
.main { width: 1899px; }
.colhead { height: 25px; display: flex; border-bottom: 1px solid #8a8a8a; background: #262626; }
.corner { width: 38px; position: relative; border-right: 1px solid #6a6a6a; flex: none; }
.corner::after { content: ""; position: absolute; right: 4px; bottom: 3px; border-left: 17px solid transparent; border-bottom: 17px solid #6a6a6a; }
.ch { flex: none; text-align: center; font-size: 16px; line-height: 26px; color: #d0d0d0; border-right: 1px solid #5c5c5c; padding-left: 1px; }
.ch.sel { background: #666; color: #fff; border-bottom: 2px solid #217346; }
.view { height: 754px; overflow: hidden; display: flex; }
.rowhead { width: 37px; border-right: 1px solid #9a9a9a; flex: none; }
.rowhead div { height: 43px; border-bottom: 1px solid #555; display: flex; justify-content: center; align-items: flex-end; font-size: 16.500px; line-height: 20px; color: #d0d0d0; padding-bottom: 1.500px; }
.page { width: 1190px; position: relative; background: #fff; border-left: 1px solid #0000d0; border-right: 3px solid #0000d0; flex: none; }
.mark { position: absolute; left: 385px; top: 538px; font: 131px/150px "Liberation Sans", sans-serif; color: #969696; white-space: pre; }
.cells { position: relative; display: grid; grid-template-columns: 38px 112px 75px 65px 318px 274px 114px 190px; grid-template-rows: repeat(18, 43px); color: #000; font: 700 20px/26px "Open Sans", "Noto Sans Gujarati", "Noto Sans", sans-serif; }
.cell { border-right: 1px solid #000; border-bottom: 1px solid #000; display: flex; flex-direction: column; align-items: center; justify-content: center; overflow: hidden; min-width: 0; min-height: 0; padding-bottom: 5px; }
.cell.left { align-items: flex-start; padding-left: 3px; }
.cell.left.pull { padding-left: 1px; }
.cell.phone { border-right: 0; font-size: 16.500px; padding-bottom: 2px; }
.cell.age { font-size: 18px; padding-bottom: 3px; }
.cell.soft-r { border-right-color: #555; } .cell.soft-b { border-bottom-color: #555; }
.cell.pale-b { border-bottom-color: #ccc; } .cell.no-b { border-bottom: 0; }
.tl { height: 26px; display: flex; flex: none; }
.cell.big { font-size: 22px; }
.spacer { grid-column: 1 / -1; grid-row: 7; display: flex; border-top: 3px solid #0000d0; border-bottom: 1px solid #000; margin-top: -2px; }
.spacer i { flex: none; border-right: 1px solid #d4d4d4; }
.banner { grid-column: 1 / -1; grid-row: 8; background: #ffc000; border: solid #000; border-width: 1px 0 2px; display: flex; align-items: center; justify-content: center; font-size: 18.500px; padding-bottom: 3px; }
.void { flex: 1; background: #a0a0a0; }
.vscroll { width: 16px; margin: 2px 0 0 3px; display: flex; flex-direction: column; height: 778px; }
.sb { width: 15px; height: 15px; border: 1px solid #6a6a6a; background: #363636; display: flex; align-items: center; justify-content: center; flex: none; }
.track { flex: 1; background: #0a0a0a; width: 15px; padding-top: 576px; }
.thumb { height: 111px; background: #363636; border: 1px solid #6a6a6a; }

.sheettabs { height: 29px; border-top: 1px solid #8a8a8a; border-bottom: 1px solid #444; display: flex; flex: none; }
.st { width: 63px; padding-left: 12px; font-size: 12.500px; line-height: 27px; height: 25px; }
.st.on { width: 66px; background: #fff; color: #217346; font-weight: 700; border-bottom: 2px solid #217346; margin-top: -1px; }
.sheettabs u { width: 1px; height: 20px; background: #777; margin-top: 3px; }
.plus { margin: 4px 0 0 32px; }
.sheettabs .dots { margin: 8px 13px 0 872px; }
.hscroll { display: flex; height: 15px; margin-top: 6px; }
.hthumb { width: 666px; border: 1px solid #6a6a6a; background: #363636; }
.htrack { width: 34px; background: #0a0a0a; }
.status { height: 22px; display: flex; align-items: center; border-bottom: 1px solid #444; flex: none; }
.ready { margin-left: 11px; } .acc { margin-left: 19px; } .access { margin-left: 2px; font-weight: 700; font-size: 11.500px; padding-bottom: 1px; }
.views { margin-left: auto; display: flex; align-items: center; gap: 26px; height: 21px; }
.von { background: #505050; width: 40px; height: 21px; display: flex; align-items: center; justify-content: center; margin-left: -13px; }
.pc { padding: 0 8px 1px 13px; display: flex; }
.taskbar { height: 47px; background: #1c1c1c; display: flex; flex: 1; position: relative; }
.dock { display: flex; margin-left: 765px; gap: 4px; padding-top: 3px; }
.ti { width: 40px; height: 40px; border-radius: 4px; display: flex; align-items: center; justify-content: center; position: relative; }
.ti.active { background: #2b2b2b; border: 1px solid #343434; }
.ti.active::after, .ti.run::after { content: ""; position: absolute; bottom: 0; width: 6px; height: 3px; border-radius: 2px; background: #8a8a8a; }
.ti.active::after { width: 16px; background: #d9a0e0; }
.badge { position: absolute; left: 21px; top: 2px; width: 16px; height: 16px; border-radius: 50%; background: radial-gradient(circle at 35% 45%, #b4aca6 0 1px, transparent 3px), radial-gradient(circle at 70% 60%, #a39b94 0 1px, transparent 4px), radial-gradient(circle at 50% 80%, #8a8580 0 1px, transparent 3px), linear-gradient(#5d666d, #33373b); }
.tray { margin-left: auto; display: flex; padding-right: 19px; width: 221px; }
.tray > svg:first-child { margin-top: 11px; width: 110px; }
.clock { width: 68px; padding-top: 7px; text-align: right; display: flex; flex-direction: column; align-items: flex-end; }
.bell { margin: 14px 0 0 7px; }
</style>
